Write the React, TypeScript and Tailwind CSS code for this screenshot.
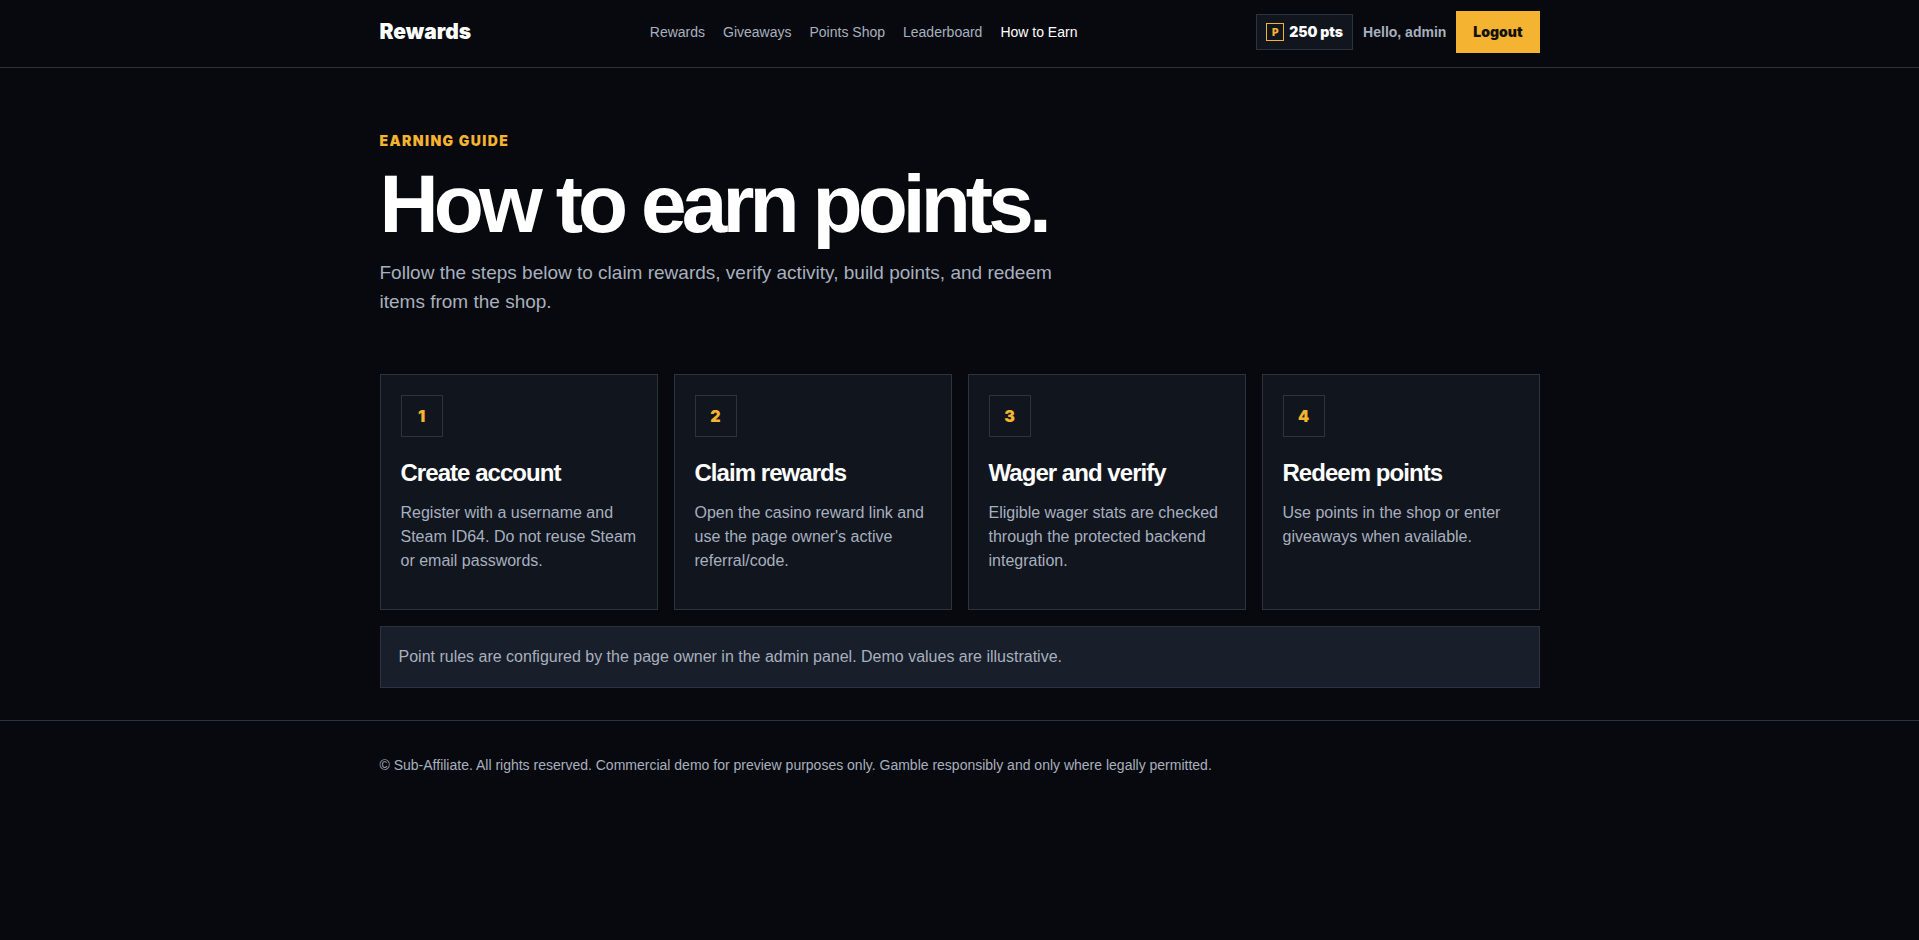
type NavItem = { href: string; label: string; active?: boolean };
type Step = { title: string; text: string };

const navItems: NavItem[] = [
  { href: '#rewards', label: 'Rewards' },
  { href: '#giveaways', label: 'Giveaways' },
  { href: '#shop', label: 'Points Shop' },
  { href: '#leaderboard', label: 'Leaderboard' },
  { href: '#how-to-earn', label: 'How to Earn', active: true }
];

const steps: Step[] = [
  {
    title: 'Create account',
    text: 'Register with a username and Steam ID64. Do not reuse Steam or email passwords.'
  },
  {
    title: 'Claim rewards',
    text: "Open the casino reward link and use the page owner's active referral/code."
  },
  {
    title: 'Wager and verify',
    text: 'Eligible wager stats are checked through the protected backend integration.'
  },
  {
    title: 'Redeem points',
    text: 'Use points in the shop or enter giveaways when available.'
  }
];

function SiteHeader() {
  return (
    <header className="border-b border-[#2d3240] px-5 pb-[3px]">
      <div className="mx-auto flex min-h-16 max-w-[1160px] flex-wrap items-center justify-between gap-x-4">
        <a href="#home" className="font-['Inter',sans-serif] text-[21px] font-black text-white">
          Rewards
        </a>

        <nav className="flex flex-wrap items-center gap-[18px] text-sm">
          {navItems.map((item) => (
            <a
              key={item.href}
              href={item.href}
              aria-current={item.active ? 'page' : undefined}
              className={item.active ? 'text-white' : 'text-[#a7b0be] hover:text-white'}
            >
              {item.label}
            </a>
          ))}
        </nav>

        <div className="flex items-center gap-[10px]">
          <div className="flex h-9 items-center gap-[5px] border border-[#2d3240] bg-[#11151e] px-[9px] font-['Inter',sans-serif] font-black">
            <span className="grid size-[18px] place-items-center border border-[#f4b331] text-[10px] leading-none text-[#f4b331]">
              P
            </span>
            <span className="text-sm text-white">250 pts</span>
          </div>
          <span className="text-sm font-bold text-[#a7b0be]">Hello, admin</span>
          <button
            type="button"
            className="h-[42px] bg-[#f4b331] px-[17px] font-['Inter',sans-serif] text-sm font-black text-[#11110d]"
          >
            Logout
          </button>
        </div>
      </div>
    </header>
  );
}

function StepCard({ step, number }: { step: Step; number: number }) {
  return (
    <article className="min-h-[236px] border border-[#2d3240] bg-[#11151e] p-5">
      <div className="grid size-[42px] place-items-center border border-[#2d3240] font-['Inter',sans-serif] text-base font-black text-[#f4b331]">
        {number}
      </div>
      <h2 className="mt-5 text-2xl font-bold tracking-[-0.04em] text-white">{step.title}</h2>
      <p className="mt-3 text-base text-[#a7b0be]">{step.text}</p>
    </article>
  );
}

export default function App() {
  return (
    <div className="min-h-screen bg-[#08090e] font-['Liberation_Sans',Arial,sans-serif] text-[#a7b0be]">
      <SiteHeader />

      <main className="px-5 pt-16 pb-8">
        <div className="mx-auto max-w-[1160px]">
          <p className="font-['Inter',sans-serif] text-sm leading-[18px] font-black tracking-widest text-[#f4b331] uppercase">
            Earning guide
          </p>
          <h1 className="mt-4 text-[82px] leading-[76px] font-bold tracking-[-0.06em] text-white">
            How to earn points.
          </h1>
          <p className="mt-4 max-w-[720px] text-[19px] leading-[29px]">
            Follow the steps below to claim rewards, verify activity, build points, and redeem items from the shop.
          </p>

          <section className="mt-[58px] grid gap-4 sm:grid-cols-2 lg:grid-cols-4">
            {steps.map((step, index) => (
              <StepCard key={step.title} step={step} number={index + 1} />
            ))}
          </section>

          <p className="mt-4 border border-[#2d3240] bg-[#181e2a] p-[18px] text-base">
            Point rules are configured by the page owner in the admin panel. Demo values are illustrative.
          </p>
        </div>
      </main>

      <footer className="border-t border-[#2d3240] px-5 py-[34px] text-sm">
        <p className="mx-auto max-w-[1160px]">
          © Sub-Affiliate. All rights reserved. Commercial demo for preview purposes only. Gamble responsibly and only
          where legally permitted.
        </p>
      </footer>
    </div>
  );
}
